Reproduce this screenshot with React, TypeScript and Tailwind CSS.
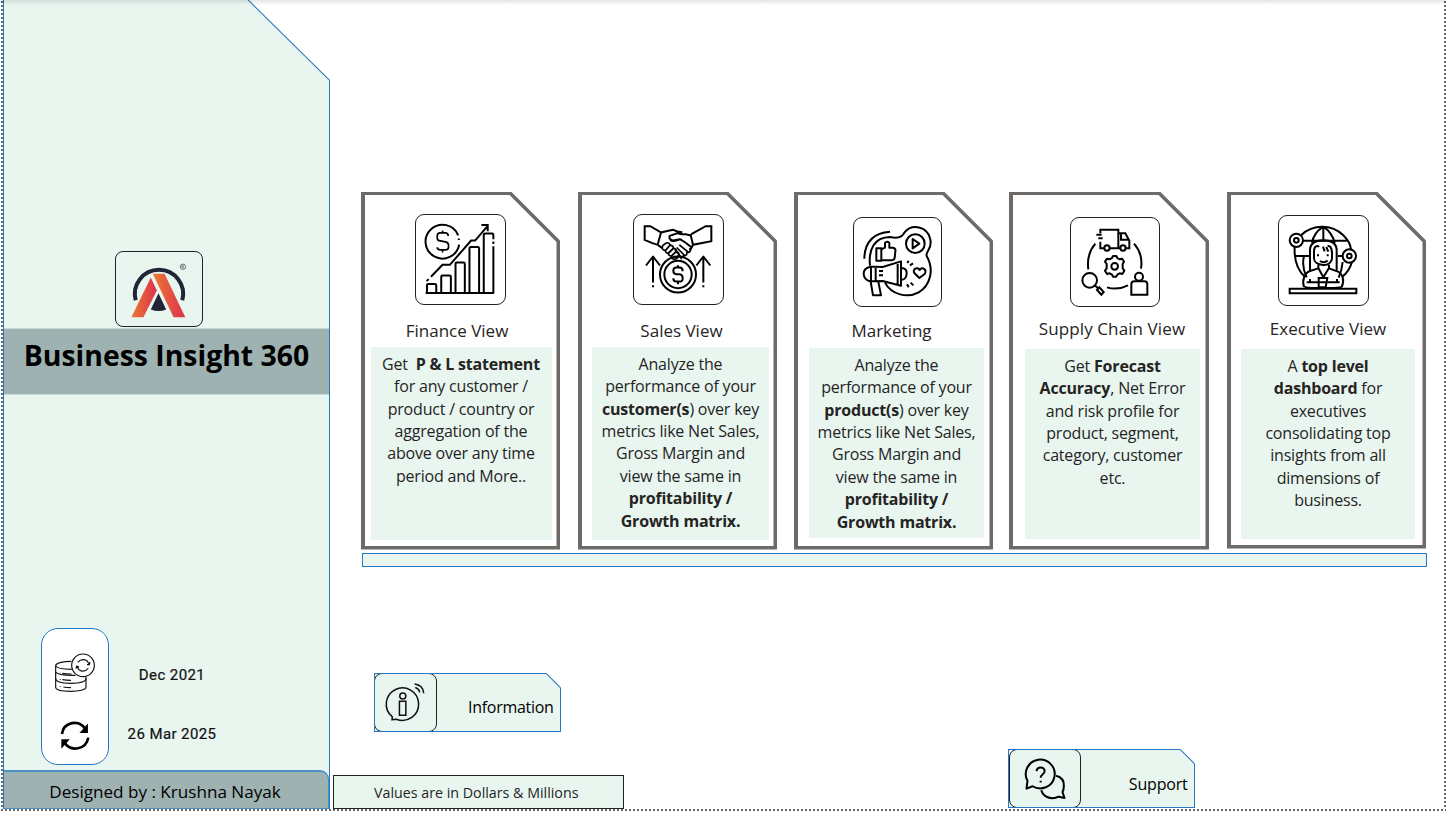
import type { ReactNode } from "react";

function FinanceIcon() {
  return (
    <svg viewBox="184 90 268 266" className="h-full w-full" fill="none" stroke="#000" strokeWidth="6">
      <path d="M311 150A51 51 0 1 0 314 178" />
      <path d="M313 160V164" />
      <path d="M281 152Q281 143 272 143H257Q248 143 248 152V158Q248 166 257 167L273 170Q282 172 282 180V185Q282 194 273 194H257Q248 194 248 186M264 136V143M264 194V202" strokeWidth="5" />
      <path d="M229 275L264 239H286L350 166H362L400 122M381 119H400V138M216 288L222 282" />
      <path d="M217 324V301Q217 297 221 297H241Q245 297 245 301V324M260 324V275Q260 271 264 271H285Q289 271 289 275V324M303 324V236Q303 232 307 232H327Q331 232 331 236V324M345 324V190Q345 185 349 185H370Q374 185 374 190V324M388 324V149Q388 145 392 145H413Q417 145 417 149V162M417 169V176M417 183V324M213 324H419" />
    </svg>
  );
}

function SalesIcon() {
  return (
    <svg viewBox="186 90 267 266" className="h-full w-full" fill="none" stroke="#000" strokeWidth="6" strokeLinejoin="round">
      <path d="M218 123H235L267 142L257 179L239 173L218 164ZM418 123H401L361 145L356 150L363 179L418 168Z" strokeLinejoin="miter" />
      <path d="M267 142L289 137L304 134L316 139L331 141M354 150L341 147H328L317 144L293 152Q289 163 304 166L324 162L340 172L358 186M258 180L271 189M363 179L354 196M294 165Q305 170 320 164" />
      <path d="M271 189Q270 181 276 178L284 173Q292 171 294 180L282 194Q274 198 271 189M280 196L293 181Q302 179 305 189L290 204Q281 205 280 196M289 204L303 190Q312 188 314 198L299 212Q290 213 289 204M298 213L311 200Q321 200 321 210L309 222Q298 222 298 213" strokeWidth="5" />
      <path d="M322 179L350 202Q358 198 353 189M314 187L339 212Q347 209 344 200M308 192L328 217Q336 215 335 208M312 222L321 213Q328 214 328 222" strokeWidth="5" />
      <circle cx="318" cy="268" r="54" />
      <circle cx="318" cy="268" r="41" />
      <path d="M332 258Q332 247 323 247H313Q304 247 304 257T313 267H323Q332 268 332 279T323 289H313Q304 289 304 279M318 240V247M318 289V297" />
      <path d="M243 292V214M222 241L243 214L264 241M243 300V306M394 292V214M373 241L394 214L415 241M394 300V306" />
    </svg>
  );
}

function MarketingIcon() {
  return (
    <svg viewBox="192 97 261 264" className="h-full w-full" fill="none" stroke="#000" strokeWidth="6" strokeLinejoin="round">
      <path d="M223 219C224 175 246 142 300 138" />
      <path d="M240 240C235 190 253 155 300 154Q334 162 343 141A44 44 0 0 1 420 158C430 188 405 198 410 211C434 253 420 301 386 320C353 338 304 328 285 291" />
      <circle cx="376" cy="174" r="28" />
      <path d="M368 160L388 174L368 188Z" />
      <path d="M259 188H274V225H259ZM274 191L285 186V172Q291 165 298 172V186H309Q318 188 316 197L314 217Q313 223 306 224H274" />
      <path d="M241 243H252L278 244L333 227V300L278 286L252 287H240Q222 282 221 265T241 243M243 243V287M257 243V287M323 231V297M336 247Q352 249 350 265T336 282M267 256H279M267 269H279M242 288L249 329H273L265 288" />
      <path d="M352 232L356 225M360 239L369 233M351 296L356 305M362 291L370 299" />
      <path d="M389 253C382 241 366 251 373 262L388 277L404 265C412 252 396 241 389 253Z" />
    </svg>
  );
}

function SupplyIcon() {
  return (
    <svg viewBox="199 97 262 264" className="h-full w-full" fill="none" stroke="#000" strokeWidth="6">
      <path d="M286 143V132H340V188H315M297 188H286V168M274 147H290M280 158H293M340 143H361L373 165V188H364M345 188H340M348 144V162H371" />
      <circle cx="306" cy="187" r="8" />
      <circle cx="354" cy="187" r="8" />
      <path d="M271 174Q244 205 250 251M387 174Q415 205 408 249M306 305Q337 315 369 299" />
      <circle cx="329" cy="242" r="10" />
      <path d="M321 217L324 211H334L337 217L344 221L351 219L357 228L353 235V248L358 255L352 265L344 263L337 267L334 273H324L321 267L314 263L306 265L300 255L305 248V235L300 228L306 219L314 221Z" strokeLinejoin="round" />
      <circle cx="254" cy="284" r="22" />
      <path d="M270 299L278 307M276 313L283 305L296 319L289 327Z" />
      <circle cx="402" cy="273" r="12" />
      <path d="M379 327V296Q379 287 388 287H418Q427 287 427 296V327Z" />
    </svg>
  );
}

function ExecutiveIcon() {
  return (
    <svg viewBox="171 93 267 267" className="h-full w-full" fill="none" stroke="#000" strokeWidth="6">
      <circle cx="223" cy="166" r="20" />
      <circle cx="223" cy="166" r="7" />
      <circle cx="382" cy="213" r="20" />
      <circle cx="382" cy="213" r="7" />
      <path d="M238 150C272 118 328 116 364 151Q385 172 387 193M218 186Q215 245 249 276M389 233Q382 258 360 276M244 167H374M221 213H262M347 213H362M304 125Q275 143 270 174M304 125Q331 143 338 174M304 125V164M246 213Q238 245 254 277M362 231Q360 254 350 278" />
      <path d="M264 260V196Q264 167 304 166Q344 167 344 196V260" />
      <path d="M276 199C276 182 287 181 291 186M329 202C330 188 323 180 317 184M276 198V220C276 231 287 239 303 240S330 231 330 220V198M303 185L308 199M313 186L319 200" />
      <path d="M288 208V214M317 208V214M294 228Q305 236 317 227" />
      <path d="M289 239V249L304 277L321 249V239M289 250L264 258C248 264 239 286 246 306M321 250L346 259C361 265 369 286 359 306M248 306Q260 310 289 309M359 306Q345 310 312 309M264 282V292H289M345 282V292H317M254 292H264M345 292H353M290 279H316L311 307H290ZM290 292H315" />
      <path d="M203 311H403V325H203Z" />
    </svg>
  );
}

function LogoMark() {
  return (
    <svg viewBox="348 36 257 221" className="h-full w-full">
      <defs>
        <linearGradient id="markLeft" x1="0" x2="1">
          <stop offset="0" stopColor="#ec7a32" />
          <stop offset="1" stopColor="#dc304f" />
        </linearGradient>
      </defs>
      <path d="M407 180A72 72 0 1 1 546 180" fill="none" stroke="#222437" strokeWidth="12" />
      <path d="M458 101H493L555 231H520Z" fill="url(#markLeft)" />
      <path d="M452 112L470 151L430 231H394Z" fill="url(#markLeft)" />
      <path d="M475 159L498 208Q475 217 452 208Z" fill="#222437" />
      <circle cx="548" cy="80" r="8" fill="none" stroke="#555b60" strokeWidth="2.5" />
      <path d="M545 85V76H549Q552 79 548 81L552 85M545 81H549" fill="none" stroke="#555b60" strokeWidth="2" />
    </svg>
  );
}

function DatabaseIcon() {
  return (
    <svg viewBox="165 114 126 120" className="h-[40px] w-[42px]" fill="none" stroke="#111" strokeWidth="3.5">
      <path d="M217 139C190 139 170 145 170 152V217C170 225 190 229 215 229S261 224 261 217V185" />
      <path d="M170 152Q174 163 218 163M170 171Q176 182 229 181M170 190C170 202 191 205 215 205S261 202 261 190" />
      <path d="M184 173V175M190 175Q200 177 218 177M184 192V194M190 194Q202 196 216 196M184 214V216M193 216Q202 218 216 218" />
      <circle cx="252" cy="151" r="34" />
      <path d="M236 142Q248 129 264 137L270 147M264 149H271L273 141M268 160Q255 174 240 164L233 154M231 161L233 153L240 156" />
    </svg>
  );
}

function RefreshIcon() {
  return (
    <svg viewBox="181 316 89 89" className="h-[29.6px] w-[29.6px]" fill="none" stroke="#000" strokeWidth="8">
      <path d="M187 355C192 318 239 310 257 340M266 366C260 402 213 411 194 380" />
      <path d="M263 329V350H244Z" fill="#000" strokeWidth="4" />
      <path d="M187 394V373H206Z" fill="#000" strokeWidth="4" />
    </svg>
  );
}

function InfoIcon() {
  return (
    <svg viewBox="151 41 180 169" className="h-full w-full" fill="none" stroke="#111" strokeWidth="4.5">
      <path d="M202 168A48 48 0 1 1 214 175L201 177Z" strokeLinejoin="round" />
      <circle cx="233" cy="106" r="9" />
      <path d="M223 122H242V163H223Z" />
      <path d="M270 81Q282 85 283 96M268 71Q293 74 295 98" />
    </svg>
  );
}

function SupportIcon() {
  return (
    <svg viewBox="31 30 208 168" className="h-full w-full" fill="none" stroke="#000" strokeWidth="6" strokeLinejoin="round">
      <path d="M83 121A43 43 0 1 1 98 137L80 144Z" />
      <path d="M168 106Q192 112 191 136Q191 147 187 154L193 172L176 168Q158 177 141 169Q128 163 124 149" />
      <path d="M110 92Q111 81 122 81T134 92Q134 98 127 103Q122 107 122 112M122 121V126" />
    </svg>
  );
}

type View = {
  title: string;
  icon: ReactNode;
  lines: ReactNode[];
  card: string;
  box: string;
  heading: string;
  panel: string;
};

const views: View[] = [
  {
    title: "Finance View",
    icon: <FinanceIcon />,
    card: "h-[358px] w-[199px]",
    box: "mt-[22.5px] ml-[54px] h-[91px] w-[91px]",
    heading: "mt-[12.5px] mr-[7px]",
    panel: "mt-[4px] ml-[9.5px] h-[193px] w-[181px]",
    lines: [<>Get&nbsp; <b>P &amp; L statement</b></>, "for any customer /", "product / country or", "aggregation of the", "above over any time", "period and More.."],
  },
  {
    title: "Sales View",
    icon: <SalesIcon />,
    card: "ml-[18px] h-[358px] w-[199px]",
    box: "mt-[22.5px] ml-[55px] h-[91px] w-[91px]",
    heading: "mt-[12.5px] ml-[8px]",
    panel: "mt-[4px] ml-[14px] h-[193px] w-[177px]",
    lines: ["Analyze the", "performance of your", <><b>customer(s</b>) over key</>, "metrics like Net Sales,", "Gross Margin and", "view the same in", <b>profitability /</b>, <b>Growth matrix.</b>],
  },
  {
    title: "Marketing",
    icon: <MarketingIcon />,
    card: "ml-[17px] h-[358px] w-[199px]",
    box: "mt-[25px] ml-[59px] h-[90px] w-[89px]",
    heading: "mt-[11px] mr-[4px]",
    panel: "mt-[5px] ml-[15px] h-[190px] w-[175px]",
    lines: ["Analyze the", "performance of your", <><b>product(s</b>) over key</>, "metrics like Net Sales,", "Gross Margin and", "view the same in", <b>profitability /</b>, <b>Growth matrix.</b>],
  },
  {
    title: "Supply Chain View",
    icon: <SupplyIcon />,
    card: "ml-[16px] h-[358px] w-[200px]",
    box: "mt-[25px] ml-[61px] h-[90px] w-[90px]",
    heading: "mt-[9px] ml-[6px] tracking-[0.1px]",
    panel: "mt-[8px] ml-[16px] h-[190px] w-[175px]",
    lines: [<>Get <b>Forecast</b></>, <><b>Accuracy</b>, Net Error</>, "and risk profile for", "product, segment,", "category, customer", "etc."],
  },
  {
    title: "Executive View",
    icon: <ExecutiveIcon />,
    card: "ml-[18px] h-[357px] w-[199px]",
    box: "mt-[23.5px] ml-[51px] h-[91px] w-[91px]",
    heading: "mt-[9.5px] ml-[3px]",
    panel: "mt-[8px] ml-[14px] h-[190px] w-[174px]",
    lines: [<>A <b>top level</b></>, <><b>dashboard</b> for</>, "executives", "consolidating top", "insights from all", "dimensions of", "business."],
  },
];

function ViewCard({ view }: { view: View }) {
  return (
    <article className={`shrink-0 bg-[#6d6a67] p-[3.5px] [clip-path:polygon(0_0,calc(100%_-_49px)_0,100%_49px,100%_100%,0_100%)] ${view.card}`}>
      <div className="flow-root h-full bg-white [clip-path:polygon(0_0,calc(100%_-_47px)_0,100%_47px,100%_100%,0_100%)]">
        <div className="-m-[3.5px] flex flex-col">
          <div className={`shrink-0 rounded-[9px] border border-[#222] ${view.box}`}>{view.icon}</div>
          <h2 className={`text-center text-[17px] leading-[25px] whitespace-nowrap text-[#252423] ${view.heading}`}>{view.title}</h2>
          <div className={`bg-[#e9f6f0] pt-[6.2px] text-center text-[16px] leading-[22.4px] tracking-[-0.2px] whitespace-nowrap text-[#252423] ${view.panel}`}>
            {view.lines.map((line, i) => (
              <p key={i}>{line}</p>
            ))}
          </div>
        </div>
      </div>
    </article>
  );
}

function CutButton({ label, icon, iconBox, labelBox, className }: { label: string; icon: ReactNode; iconBox: string; labelBox: string; className: string }) {
  return (
    <div className={`shrink-0 bg-[#2478c4] p-px [clip-path:polygon(0_0,calc(100%_-_14.5px)_0,100%_14.5px,100%_100%,0_100%)] ${className}`}>
      <div className="flex h-full bg-[#e9f6f0] [clip-path:polygon(0_0,calc(100%_-_14px)_0,100%_14px,100%_100%,0_100%)]">
        <div className={`shrink-0 rounded-[8px] border border-[#222] ${iconBox}`}>{icon}</div>
        <span className={`ml-auto pr-[6.5px] text-[16px] leading-6 text-black ${labelBox}`}>{label}</span>
      </div>
    </div>
  );
}

export default function App() {
  return (
    <div className="relative flex h-[813px] w-[1446px] flex-col overflow-hidden bg-white font-['Open_Sans','Noto_Sans',sans-serif]">
      <div className="flex h-[809px]">
        <div className="ml-px w-[2px] shrink-0 bg-[repeating-linear-gradient(to_bottom,#fff_0_1px,#666_1px_3px,#fff_3px_4px)]" />
        <aside className="w-[327px] shrink-0 bg-[#2478c4] px-px [clip-path:polygon(0_0,246px_0,100%_80px,100%_100%,0_100%)]">
          <div className="flex h-full flex-col bg-[#e9f6f0] [clip-path:polygon(0_0,243.5px_0,100%_80.5px,100%_100%,0_100%)]">
            <div className="mt-[251px] ml-[111px] h-[76px] w-[88px] shrink-0 rounded-[8px] border border-[#222]">
              <LogoMark />
            </div>
            <div className="mt-[0.5px] h-[67px] shrink-0 border-y border-[#c9d9d5] bg-[#9fb2b2] text-center">
              <h1 className="text-[28.4px] leading-[52px] font-bold whitespace-nowrap text-black">Business Insight 360</h1>
            </div>
            <div className="mt-[233.5px] ml-[37px] flex">
              <div className="flex h-[136.5px] w-[68px] flex-col items-center rounded-[17px] border border-[#2478c4] bg-white">
                <div className="mt-[24px]"><DatabaseIcon /></div>
                <div className="mt-[27.5px]"><RefreshIcon /></div>
              </div>
              <div className="ml-[12.5px] w-[101px] pt-[35px] text-center font-['Roboto',sans-serif] text-[15px] leading-6 tracking-[0.4px] whitespace-nowrap text-[#111] [-webkit-text-stroke:0.2px_#111]">
                <p>Dec 2021</p>
                <p className="mt-[35px]">26 Mar 2025</p>
              </div>
            </div>
            <div className="mt-auto h-[39px] rounded-tr-[9px] border-t-2 border-r border-b border-[#4c90c4] bg-[#9fb2b2] pr-[2px] text-center text-[17.1px] leading-[40px] whitespace-nowrap text-black">
              Designed by : Krushna Nayak
            </div>
          </div>
        </aside>
        <main className="flex w-[1114px] shrink-0 flex-col">
          <section className="flex pt-[191.5px] pl-[31px]">
            {views.map((view) => (
              <ViewCard key={view.title} view={view} />
            ))}
          </section>
          <div className="mt-[3.5px] ml-[32px] h-[14px] w-[1065px] shrink-0 border border-[#2478c4] bg-[#e9f6f0]" />
          <CutButton label="Information" icon={<InfoIcon />} iconBox="-my-px -ml-px w-[63px]" labelBox="pt-[20.5px] tracking-[-0.3px]" className="mt-[106px] ml-[44px] h-[59px] w-[187px]" />
          <div className="mt-auto flex items-end">
            <div className="ml-[3px] h-[34px] w-[291px] shrink-0 border border-[#222] bg-[#e9f6f0] pl-[40px] text-[14.25px] leading-[33px] whitespace-nowrap text-[#252423]">
              Values are in Dollars &amp; Millions
            </div>
            <CutButton label="Support" icon={<SupportIcon />} iconBox="-my-px w-[72px]" labelBox="pt-[21.5px] tracking-[-0.2px]" className="mb-px ml-[384px] h-[59px] w-[187px]" />
          </div>
        </main>
        <div className="w-[2px] shrink-0 bg-[repeating-linear-gradient(to_bottom,#fff_0_1px,#666_1px_3px,#fff_3px_4px)]" />
      </div>
      <div className="ml-px h-[2px] shrink-0 bg-[repeating-linear-gradient(to_right,#666_0_2px,#fff_2px_4px)]" />
      <div className="pointer-events-none absolute inset-x-0 top-0 h-[5px] bg-linear-to-b from-black/10 to-transparent" />
    </div>
  );
}
